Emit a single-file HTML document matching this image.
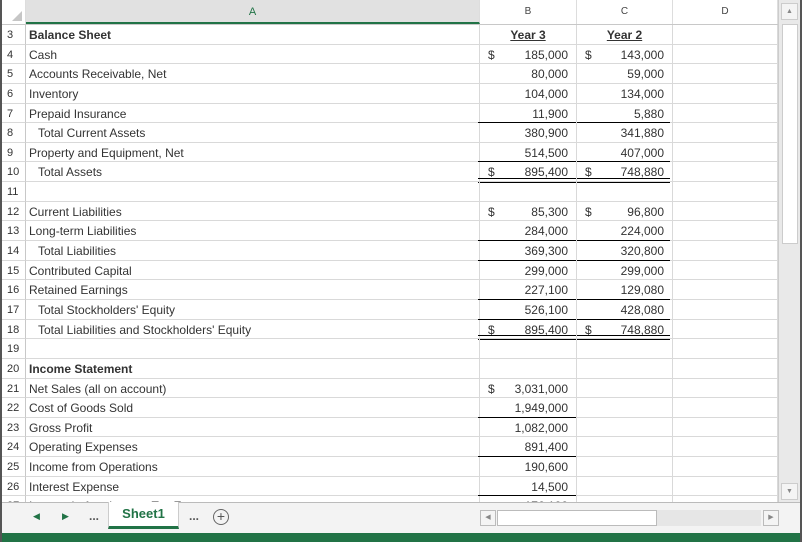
<!DOCTYPE html><html><head><style>
*{margin:0;padding:0;box-sizing:border-box}
body{width:802px;height:542px;overflow:hidden;background:#fff;font-family:"Liberation Sans",sans-serif;font-size:12px;color:#333;position:relative}
#frame{position:absolute;left:0;top:0;width:802px;height:542px;border-left:2px solid #555;border-right:2px solid #555;pointer-events:none;z-index:9}
#hdr{position:absolute;top:0;left:2px;height:25px;width:776px;display:flex;border-bottom:1px solid #c8c8c8}
#hdr div{font-size:10px;text-align:center;line-height:24px;color:#444;border-right:1px solid #ddd}
#rows{position:absolute;top:25px;left:2px;width:776px;height:477px;overflow:hidden;display:flex;flex-direction:column}
.r{height:19.65px;flex:none;display:flex}
.r>div{border-right:1px solid #d9d9d9;border-bottom:1px solid #d9d9d9;height:100%;white-space:nowrap;overflow:visible;line-height:20px;position:relative}
.h{width:24px;font-size:11px;padding-left:5px;color:#333;border-right:1px solid #c8c8c8!important}
.a{width:454px;padding-left:3px}
.b{width:97px}.c{width:96px}.d{width:105px}
.n{text-align:right;padding-right:8px}
.s{position:absolute;left:8px}
.u:after{content:"";position:absolute;left:-2px;right:0;bottom:-1px;border-bottom:1px solid #000}
.dd:after{content:"";position:absolute;left:-2px;right:0;bottom:-2px;height:3px;border-top:1px solid #000;border-bottom:1px solid #000}
.c.u:after,.c.dd:after{left:0;right:2px}
.i{padding-left:12px}
b{font-weight:bold}
.yh{text-align:center;font-weight:bold;text-decoration:underline}
#vs{position:absolute;left:778px;top:0;width:22px;height:502px;background:#e9e9e9;border-left:1px solid #ccc}
#tabs{position:absolute;left:2px;top:502px;width:798px;height:31px;background:#f3f3f3;border-top:1px solid #bbb}
#status{position:absolute;left:0;top:533px;width:802px;height:9px;background:#217346}
</style></head><body>
<div id="hdr">
<div style="width:24px;background:#fff;position:relative"><span style="position:absolute;right:3px;bottom:3px;width:0;height:0;border-left:10px solid transparent;border-bottom:10px solid #c6c6c6"></span></div>
<div style="width:454px;background:#e1e1e1;color:#217346;border-bottom:2px solid #217346;font-size:11px">A</div>
<div style="width:97px">B</div><div style="width:96px">C</div><div style="width:105px">D</div>
</div>
<div id="rows">
<div class="r"><div class="h">3</div><div class="a"><b>Balance Sheet</b></div><div class="b yh">Year 3</div><div class="c yh">Year 2</div><div class="d"></div></div>
<div class="r"><div class="h">4</div><div class="a">Cash</div><div class="b n"><span class="s">$</span>185,000</div><div class="c n"><span class="s">$</span>143,000</div><div class="d"></div></div>
<div class="r"><div class="h">5</div><div class="a">Accounts Receivable, Net</div><div class="b n">80,000</div><div class="c n">59,000</div><div class="d"></div></div>
<div class="r"><div class="h">6</div><div class="a">Inventory</div><div class="b n">104,000</div><div class="c n">134,000</div><div class="d"></div></div>
<div class="r"><div class="h">7</div><div class="a">Prepaid Insurance</div><div class="b n u">11,900</div><div class="c n u">5,880</div><div class="d"></div></div>
<div class="r"><div class="h">8</div><div class="a i">Total Current Assets</div><div class="b n">380,900</div><div class="c n">341,880</div><div class="d"></div></div>
<div class="r"><div class="h">9</div><div class="a">Property and Equipment, Net</div><div class="b n u">514,500</div><div class="c n u">407,000</div><div class="d"></div></div>
<div class="r"><div class="h">10</div><div class="a i">Total Assets</div><div class="b n dd"><span class="s">$</span>895,400</div><div class="c n dd"><span class="s">$</span>748,880</div><div class="d"></div></div>
<div class="r"><div class="h">11</div><div class="a"></div><div class="b"></div><div class="c"></div><div class="d"></div></div>
<div class="r"><div class="h">12</div><div class="a">Current Liabilities</div><div class="b n"><span class="s">$</span>85,300</div><div class="c n"><span class="s">$</span>96,800</div><div class="d"></div></div>
<div class="r"><div class="h">13</div><div class="a">Long-term Liabilities</div><div class="b n u">284,000</div><div class="c n u">224,000</div><div class="d"></div></div>
<div class="r"><div class="h">14</div><div class="a i">Total Liabilities</div><div class="b n u">369,300</div><div class="c n u">320,800</div><div class="d"></div></div>
<div class="r"><div class="h">15</div><div class="a">Contributed Capital</div><div class="b n">299,000</div><div class="c n">299,000</div><div class="d"></div></div>
<div class="r"><div class="h">16</div><div class="a">Retained Earnings</div><div class="b n u">227,100</div><div class="c n u">129,080</div><div class="d"></div></div>
<div class="r"><div class="h">17</div><div class="a i">Total Stockholders' Equity</div><div class="b n u">526,100</div><div class="c n u">428,080</div><div class="d"></div></div>
<div class="r"><div class="h">18</div><div class="a i">Total Liabilities and Stockholders' Equity</div><div class="b n dd"><span class="s">$</span>895,400</div><div class="c n dd"><span class="s">$</span>748,880</div><div class="d"></div></div>
<div class="r"><div class="h">19</div><div class="a"></div><div class="b"></div><div class="c"></div><div class="d"></div></div>
<div class="r"><div class="h">20</div><div class="a"><b>Income Statement</b></div><div class="b"></div><div class="c"></div><div class="d"></div></div>
<div class="r"><div class="h">21</div><div class="a">Net Sales (all on account)</div><div class="b n"><span class="s">$</span>3,031,000</div><div class="c"></div><div class="d"></div></div>
<div class="r"><div class="h">22</div><div class="a">Cost of Goods Sold</div><div class="b n u">1,949,000</div><div class="c"></div><div class="d"></div></div>
<div class="r"><div class="h">23</div><div class="a">Gross Profit</div><div class="b n">1,082,000</div><div class="c"></div><div class="d"></div></div>
<div class="r"><div class="h">24</div><div class="a">Operating Expenses</div><div class="b n u">891,400</div><div class="c"></div><div class="d"></div></div>
<div class="r"><div class="h">25</div><div class="a">Income from Operations</div><div class="b n">190,600</div><div class="c"></div><div class="d"></div></div>
<div class="r"><div class="h">26</div><div class="a">Interest Expense</div><div class="b n u">14,500</div><div class="c"></div><div class="d"></div></div>
<div class="r"><div class="h">27</div><div class="a">Income before Income Tax Expense</div><div class="b n">176,100</div><div class="c"></div><div class="d"></div></div>
</div>
<div id="vs">
<div style="position:absolute;left:2px;top:3px;width:17px;height:17px;background:#f4f4f4;border:1px solid #ccc;font-size:7px;text-align:center;line-height:15px;color:#888">▲</div>
<div style="position:absolute;left:3px;top:24px;width:16px;height:220px;background:#fff;border:1px solid #ccc"></div>
<div style="position:absolute;left:2px;top:483px;width:17px;height:17px;background:#f4f4f4;border:1px solid #ccc;font-size:7px;text-align:center;line-height:15px;color:#888">▼</div>
</div>
<div id="tabs">
<span style="position:absolute;left:31px;top:8px;font-size:9px;color:#217346">◀</span>
<span style="position:absolute;left:60px;top:8px;font-size:9px;color:#217346">▶</span>
<span style="position:absolute;left:87px;top:6px;font-weight:bold;color:#555">...</span>
<div style="position:absolute;left:106px;top:-1px;width:71px;height:27px;background:#fff;border:1px solid #ccc;border-top:none;border-bottom:3px solid #217346;text-align:center;font-weight:bold;color:#217346;font-size:13px;line-height:24px">Sheet1</div>
<span style="position:absolute;left:187px;top:6px;font-weight:bold;color:#555">...</span>
<div style="position:absolute;left:211px;top:6px;width:16px;height:16px;border:1px solid #666;border-radius:50%;text-align:center;line-height:13px;color:#555;font-size:14px">+</div>
<div style="position:absolute;left:478px;top:7px;width:16px;height:16px;background:#f4f4f4;border:1px solid #bbb;font-size:7px;line-height:14px;text-align:center;color:#888">◀</div>
<div style="position:absolute;left:495px;top:7px;width:160px;height:16px;background:#fff;border:1px solid #bbb"></div>
<div style="position:absolute;left:655px;top:7px;width:104px;height:16px;background:#e6e6e6"></div>
<div style="position:absolute;left:761px;top:7px;width:16px;height:16px;background:#f4f4f4;border:1px solid #bbb;font-size:7px;line-height:14px;text-align:center;color:#888">▶</div>
</div>
<div id="status"></div>
<div id="frame"></div>
</body></html>
